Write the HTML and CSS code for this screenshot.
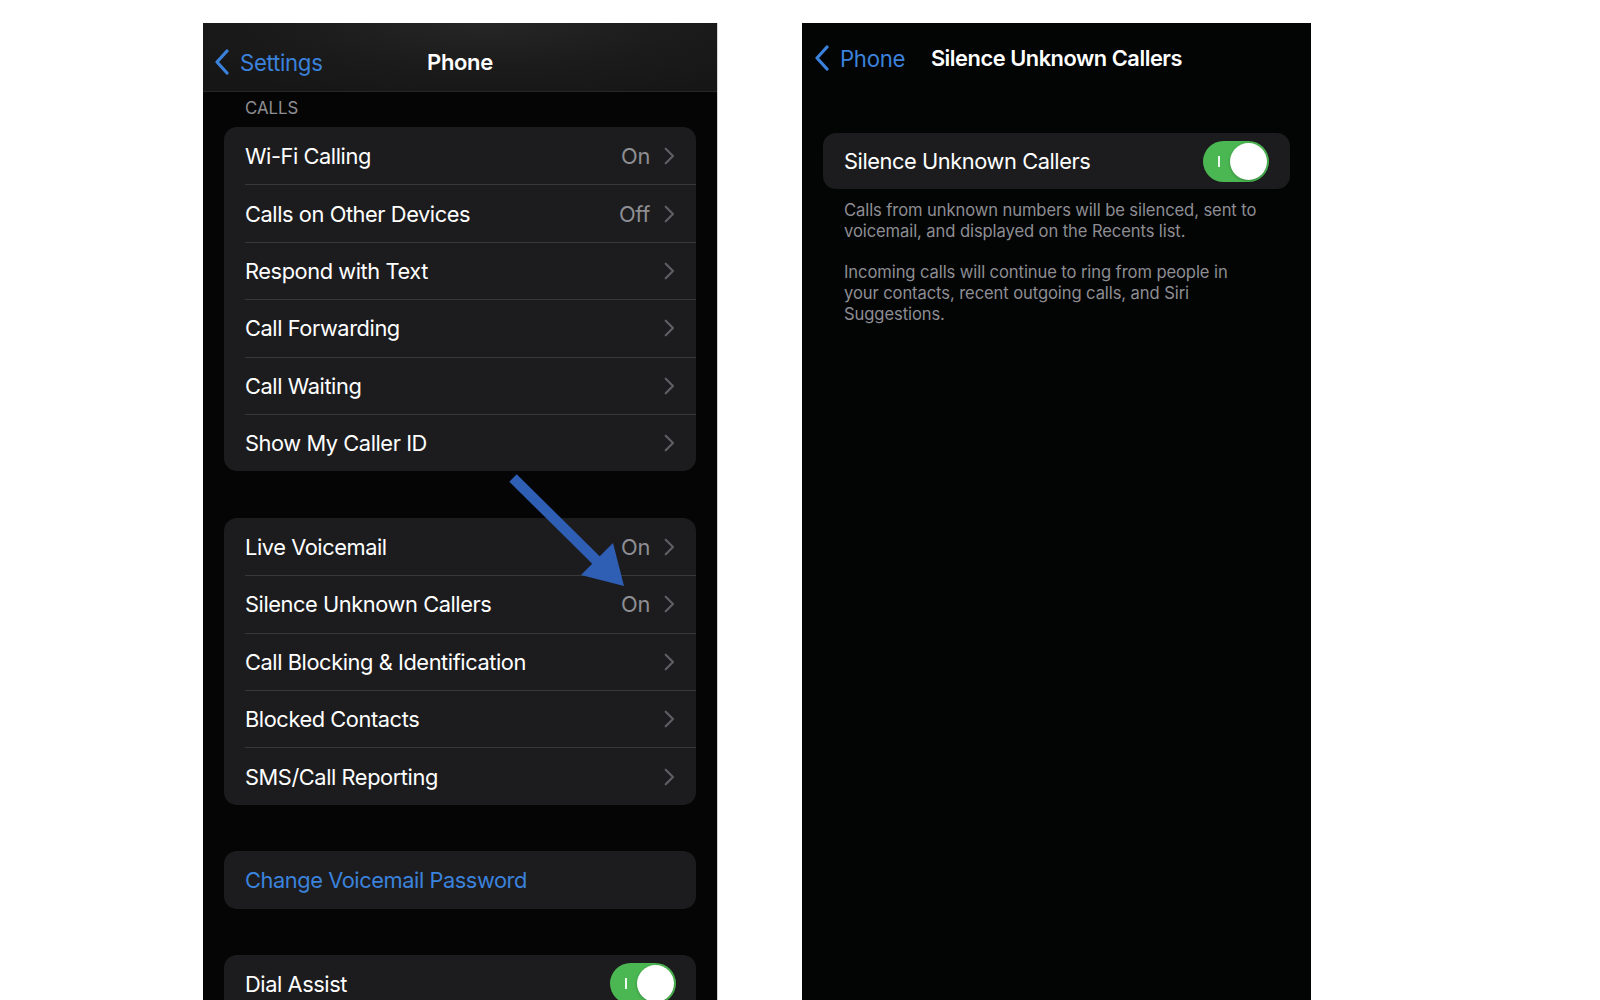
FILE: index.html
```html
<!DOCTYPE html>
<html lang="en">
<head>
<meta charset="utf-8">
<title>Phone settings</title>
<link rel="stylesheet" href="styles.css">
</head>
<body>
<div class="page">
  <section class="phone phone-left">
    <header class="nav nav-left">
      <div class="nav-back">
        <svg class="back-chev" viewBox="0 0 16 26" width="16" height="26"><path d="M13 2 L3 13 L13 24" fill="none" stroke="#3b82dc" stroke-width="3.2" stroke-linecap="round" stroke-linejoin="round"/></svg>
        <span>Settings</span>
      </div>
      <div class="nav-title">Phone</div>
      <div></div>
    </header>
    <div class="section-header">CALLS</div>
    <div class="groups">
      <div class="group">
        <div class="row"><div class="row-inner"><span class="label">Wi-Fi Calling</span><span class="value">On</span><svg class="chev" viewBox="0 0 11 18"><path d="M1.7 1.7 L9 9 L1.7 16.3" fill="none" stroke="#5e5e63" stroke-width="2.2" stroke-linecap="round" stroke-linejoin="round"/></svg></div></div>
        <div class="row"><div class="row-inner"><span class="label">Calls on Other Devices</span><span class="value">Off</span><svg class="chev" viewBox="0 0 11 18"><path d="M1.7 1.7 L9 9 L1.7 16.3" fill="none" stroke="#5e5e63" stroke-width="2.2" stroke-linecap="round" stroke-linejoin="round"/></svg></div></div>
        <div class="row"><div class="row-inner"><span class="label">Respond with Text</span><svg class="chev" viewBox="0 0 11 18"><path d="M1.7 1.7 L9 9 L1.7 16.3" fill="none" stroke="#5e5e63" stroke-width="2.2" stroke-linecap="round" stroke-linejoin="round"/></svg></div></div>
        <div class="row"><div class="row-inner"><span class="label">Call Forwarding</span><svg class="chev" viewBox="0 0 11 18"><path d="M1.7 1.7 L9 9 L1.7 16.3" fill="none" stroke="#5e5e63" stroke-width="2.2" stroke-linecap="round" stroke-linejoin="round"/></svg></div></div>
        <div class="row"><div class="row-inner"><span class="label">Call Waiting</span><svg class="chev" viewBox="0 0 11 18"><path d="M1.7 1.7 L9 9 L1.7 16.3" fill="none" stroke="#5e5e63" stroke-width="2.2" stroke-linecap="round" stroke-linejoin="round"/></svg></div></div>
        <div class="row"><div class="row-inner"><span class="label">Show My Caller ID</span><svg class="chev" viewBox="0 0 11 18"><path d="M1.7 1.7 L9 9 L1.7 16.3" fill="none" stroke="#5e5e63" stroke-width="2.2" stroke-linecap="round" stroke-linejoin="round"/></svg></div></div>
      </div>
      <div class="group">
        <div class="row"><div class="row-inner"><span class="label">Live Voicemail</span><span class="value">On</span><svg class="chev" viewBox="0 0 11 18"><path d="M1.7 1.7 L9 9 L1.7 16.3" fill="none" stroke="#5e5e63" stroke-width="2.2" stroke-linecap="round" stroke-linejoin="round"/></svg></div></div>
        <div class="row"><div class="row-inner"><span class="label">Silence Unknown Callers</span><span class="value">On</span><svg class="chev" viewBox="0 0 11 18"><path d="M1.7 1.7 L9 9 L1.7 16.3" fill="none" stroke="#5e5e63" stroke-width="2.2" stroke-linecap="round" stroke-linejoin="round"/></svg></div></div>
        <div class="row"><div class="row-inner"><span class="label">Call Blocking &amp; Identification</span><svg class="chev" viewBox="0 0 11 18"><path d="M1.7 1.7 L9 9 L1.7 16.3" fill="none" stroke="#5e5e63" stroke-width="2.2" stroke-linecap="round" stroke-linejoin="round"/></svg></div></div>
        <div class="row"><div class="row-inner"><span class="label">Blocked Contacts</span><svg class="chev" viewBox="0 0 11 18"><path d="M1.7 1.7 L9 9 L1.7 16.3" fill="none" stroke="#5e5e63" stroke-width="2.2" stroke-linecap="round" stroke-linejoin="round"/></svg></div></div>
        <div class="row"><div class="row-inner"><span class="label">SMS/Call Reporting</span><svg class="chev" viewBox="0 0 11 18"><path d="M1.7 1.7 L9 9 L1.7 16.3" fill="none" stroke="#5e5e63" stroke-width="2.2" stroke-linecap="round" stroke-linejoin="round"/></svg></div></div>
      </div>
      <div class="group">
        <div class="row"><div class="row-inner"><span class="label link">Change Voicemail Password</span></div></div>
      </div>
      <div class="group">
        <div class="row"><div class="row-inner toggle-inner"><span class="label">Dial Assist</span><span class="toggle"><span class="toggle-mark"></span><span class="knob"></span></span></div></div>
      </div>
    </div>
    <svg class="arrow" viewBox="0 0 130 120" width="130" height="120">
      <line x1="8" y1="4" x2="93" y2="88" stroke="#2f5fb5" stroke-width="10.5"/>
      <polygon points="76,101 108,69 119,112" fill="#2f5fb5"/>
    </svg>
  </section>

  <section class="phone phone-right">
    <header class="nav nav-right">
      <div class="nav-back">
        <svg class="back-chev" viewBox="0 0 16 26" width="16" height="26"><path d="M13 2 L3 13 L13 24" fill="none" stroke="#3b82dc" stroke-width="3.2" stroke-linecap="round" stroke-linejoin="round"/></svg>
        <span>Phone</span>
      </div>
      <div class="nav-title">Silence Unknown Callers</div>
      <div></div>
    </header>
    <div class="group group-single">
      <div class="row"><div class="row-inner toggle-inner right-inner"><span class="label">Silence Unknown Callers</span><span class="toggle"><span class="toggle-mark"></span><span class="knob"></span></span></div></div>
    </div>
    <div class="footer">
      <p>Calls from unknown numbers will be silenced, sent to<br>voicemail, and displayed on the Recents list.</p>
      <p>Incoming calls will continue to ring from people in<br>your contacts, recent outgoing calls, and Siri<br>Suggestions.</p>
    </div>
  </section>
</div>
</body>
</html>
```

FILE: styles.css
```css
* { box-sizing: border-box; }

body {
  margin: 0;
  background: #ffffff;
  font-family: Inter, "Noto Sans", "Liberation Sans", sans-serif;
  -webkit-font-smoothing: antialiased;
}

.page {
  display: flex;
  align-items: flex-start;
  gap: 84px;
  height: 1000px;
  padding: 23px 0 0 203px;
  overflow: hidden;
}

.phone {
  position: relative;
  height: 977px;
  overflow: hidden;
}

.phone-left {
  width: 515px;
  background: #050505;
  border-right: 1px solid #d4d4d4;
}

.phone-right {
  width: 509px;
  background: #030404;
}

/* navigation bars */
.nav {
  display: grid;
  grid-template-columns: 1fr auto 1fr;
  align-items: center;
}

.nav-left {
  height: 69px;
  padding-top: 10px;
  background: radial-gradient(ellipse 70% 120% at 55% 0%, #262626 0%, #1b1b1b 55%, #161616 100%);
  border-bottom: 1px solid #262628;
}

.nav-right {
  height: 64px;
  padding-top: 6px;
}

.nav-back {
  display: flex;
  align-items: center;
  gap: 10px;
  padding-left: 11px;
  color: #3b82dc;
  font-size: 22.2px;
  letter-spacing: -0.3px;
}

.nav-right .nav-back {
  gap: 10px;
  padding-left: 12px;
}

.back-chev {
  display: block;
  flex: none;
}

.nav-title {
  color: #ffffff;
  font-size: 22px;
  font-weight: 600;
  letter-spacing: -0.35px;
}

.nav-right .nav-title {
  font-size: 21.8px;
  letter-spacing: -0.45px;
}

/* list */
.section-header {
  padding: 6px 0 9px 42px;
  font-size: 16.8px;
  line-height: 20px;
  color: #8e8e93;
  letter-spacing: 0;
}

.groups {
  display: flex;
  flex-direction: column;
  gap: 46.5px;
}

.group {
  margin: 0 21px;
  background: #1c1c1e;
  border-radius: 13px;
  overflow: hidden;
}

.row {
  height: 57.4px;
  padding-left: 21px;
}

.row-inner {
  display: flex;
  align-items: center;
  height: 100%;
  padding-right: 21px;
  border-top: 1px solid #38383a;
}

.row:first-child .row-inner {
  border-top: none;
}

.label {
  flex: 1;
  color: #ffffff;
  font-size: 21.8px;
  letter-spacing: -0.42px;
  white-space: nowrap;
}

.label.link {
  color: #3b82dc;
}

.value {
  margin-right: 14px;
  color: #8e8e93;
  font-size: 21.8px;
  letter-spacing: -0.3px;
}

.chev {
  display: block;
  width: 11px;
  height: 18px;
  flex: none;
}

/* toggle */
.toggle-inner {
  padding-right: 20px;
}

.toggle {
  display: flex;
  align-items: center;
  justify-content: space-between;
  width: 66px;
  height: 41px;
  padding: 0 2px 0 15px;
  border-radius: 21px;
  background: #4bb752;
  flex: none;
}

.toggle-mark {
  width: 1.6px;
  height: 11px;
  background: rgba(255, 255, 255, 0.9);
}

.knob {
  width: 37px;
  height: 37px;
  border-radius: 50%;
  background: #ffffff;
  box-shadow: 0 1px 3px rgba(0, 0, 0, 0.25);
}

/* annotation arrow */
.arrow {
  position: absolute;
  left: 302px;
  top: 451px;
}

/* right screen */
.group-single {
  margin-top: 46px;
}

.group-single .row {
  height: 56px;
}

.right-inner {
  padding-right: 21px;
}

.footer {
  padding: 11px 30px 0 42px;
  font-size: 16.6px;
  line-height: 20.7px;
  color: #8d8d93;
  letter-spacing: -0.1px;
}

.footer p {
  margin: 0;
}

.footer p + p {
  margin-top: 20.7px;
}
```
